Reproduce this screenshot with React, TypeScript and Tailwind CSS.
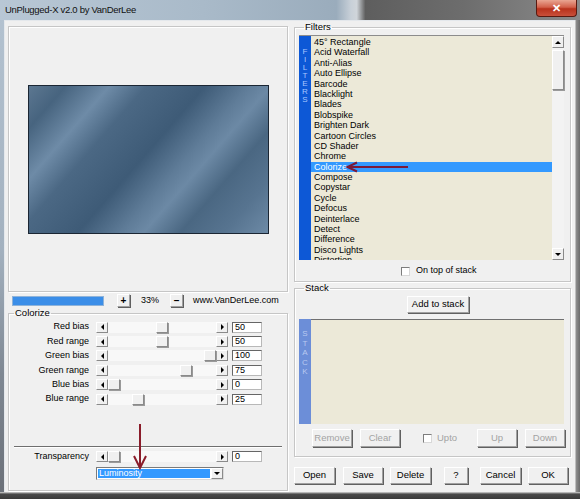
import React from 'react';

const FILTERS = [
  '45° Rectangle',
  'Acid Waterfall',
  'Anti-Alias',
  'Auto Ellipse',
  'Barcode',
  'Blacklight',
  'Blades',
  'Blobspike',
  'Brighten Dark',
  'Cartoon Circles',
  'CD Shader',
  'Chrome',
  'Colorize',
  'Compose',
  'Copystar',
  'Cycle',
  'Defocus',
  'Deinterlace',
  'Detect',
  'Difference',
  'Disco Lights',
  'Distortion'
];

const SLIDERS = [
  { label: 'Red bias', value: 50 },
  { label: 'Red range', value: 50 },
  { label: 'Green bias', value: 100 },
  { label: 'Green range', value: 75 },
  { label: 'Blue bias', value: 0 },
  { label: 'Blue range', value: 25 }
];

type Dir = 'left' | 'right' | 'up' | 'down';

function Tri({ dir }: { dir: Dir }) {
  const points = {
    left: '4,0 4,6 1,3',
    right: '1,0 1,6 4,3',
    up: '0,4 6,4 3,1',
    down: '0,1 6,1 3,4'
  }[dir];
  const horizontal = dir === 'left' || dir === 'right';
  return (
    <svg
      width={horizontal ? 5 : 6}
      height={horizontal ? 6 : 5}
      viewBox={horizontal ? '0 0 5 6' : '0 0 6 5'}
      className="block"
    >
      <polygon points={points} fill="#000" />
    </svg>
  );
}

const raised =
  'border border-t-white border-l-white border-r-[#8a8a8a] border-b-[#8a8a8a] bg-[#f0f0f0]';

function ArrowBtn({ dir, className = '' }: { dir: Dir; className?: string }) {
  return (
    <div className={`flex items-center justify-center ${raised} ${className}`}>
      <Tri dir={dir} />
    </div>
  );
}

function Button({
  children,
  className = '',
  disabled = false
}: {
  children: React.ReactNode;
  className?: string;
  disabled?: boolean;
}) {
  return (
    <div
      className={`flex items-center justify-center border border-t-white border-l-white border-r-[#a0a0a0] border-b-[#a0a0a0] bg-[#f0f0f0] text-[9.5px] shadow-[1px_1px_0_#606060] ${
        disabled ? 'text-[#a3a3a3]' : 'text-black'
      } ${className}`}
    >
      {children}
    </div>
  );
}

function Checkbox() {
  return (
    <div className="h-[9px] w-[9px] border border-[#7d7d7d] border-r-[#d8d8d8] border-b-[#d8d8d8] bg-white" />
  );
}

function ValueBox({ value }: { value: string }) {
  return (
    <div className="ml-[4px] h-[11px] w-[30px] border border-[#b8b8b8] border-l-[#666] border-t-[#666] bg-white pl-[2px] text-[9px] leading-[9px]">
      {value}
    </div>
  );
}

function SliderRow({ label, value }: { label: string; value: number }) {
  return (
    <div className="flex h-[14.4px] items-center">
      <span className="w-[80px] text-right text-[9px]">{label}</span>
      <div className="ml-[7px] flex h-[11px] w-[132px]">
        <ArrowBtn dir="left" className="w-[12px]" />
        <div className="relative flex-1 bg-[#f8f8f8]">
          <div
            className={`absolute top-0 h-full w-[12px] ${raised} shadow-[1px_1px_0_#9a9a9a]`}
            style={{ left: Math.round(value * 0.96) }}
          />
        </div>
        <ArrowBtn dir="right" className="w-[12px]" />
      </div>
      <ValueBox value={String(value)} />
    </div>
  );
}

function GroupLabel({ children }: { children: React.ReactNode }) {
  return <legend className="ml-[5px] px-[1px] text-[9.5px] leading-[10px]">{children}</legend>;
}

const etched = 'border border-[#c6c6c6] shadow-[inset_1px_1px_0_#fff,1px_1px_0_#fff]';

function SideBar({ text, color, letterColor, pt, step }: { text: string; color: string; letterColor: string; pt: string; step: string }) {
  return (
    <div className={`flex w-[12px] shrink-0 flex-col items-center ${color} ${pt}`}>
      {text.split('').map((ch, i) => (
        <span key={i} className={`text-[8px] ${step} ${letterColor}`}>
          {ch}
        </span>
      ))}
    </div>
  );
}

function LeftColumn() {
  return (
    <div className="flex w-[280px] flex-col pt-[5px]">
      <div className={`flex h-[266px] items-center justify-center ${etched} bg-[#f0f0f0]`}>
        <div className="h-[149px] w-[241px] border border-[#1b2633] bg-[linear-gradient(131deg,#5c7791_0%,#47647f_10%,#6e8ba7_22%,#4b6884_32%,#3e5b77_48%,#5f7c98_60%,#6c89a5_66%,#4a6782_76%,#577490_88%,#6d8aa6_100%)]" />
      </div>

      <div className="mt-[1px] flex h-[15px] items-center text-[9px]">
        <div className="ml-[4px] h-[10px] w-[92px] border border-[#8fb3d9] bg-[#3b8ee8]" />
        <Button className="ml-[13px] h-[13px] w-[13px] !text-[10px] font-bold leading-none">+</Button>
        <span className="w-[40px] text-center">33%</span>
        <Button className="h-[13px] w-[13px] !text-[10px] font-bold leading-none">–</Button>
        <span className="ml-[10px]">www.VanDerLee.com</span>
      </div>

      <fieldset className={`h-[183px] ${etched}`}>
        <GroupLabel>Colorize</GroupLabel>
        <div className="mt-[2px] flex flex-col">
          {SLIDERS.map((s) => (
            <SliderRow key={s.label} label={s.label} value={s.value} />
          ))}
        </div>
        <div className="relative mt-[40px]">
          <div className="mx-[5px] h-[2px] border-t border-[#6f6f6f] border-b border-b-white" />
          <div className="mt-[1px]">
            <SliderRow label="Transparency" value={0} />
          </div>
          <div className="ml-[87px] mt-[3px] flex h-[13px] w-[128px] border border-[#7a7a7a] border-r-[#dadada] border-b-[#dadada] bg-white">
            <div className="m-[1px] flex-1 bg-[#3399ff] pl-[1px] text-[9px] leading-[9px] text-white">Luminosity</div>
            <ArrowBtn dir="down" className="w-[12px]" />
          </div>
          <svg className="absolute left-[124px] -top-[22px]" width="14" height="46" viewBox="0 0 14 46">
            <line x1="7" y1="0" x2="7" y2="44" stroke="#8a1c2a" strokeWidth="2" />
            <polyline points="1,32 7,44 13,32" fill="none" stroke="#8a1c2a" strokeWidth="2" />
          </svg>
        </div>
      </fieldset>
    </div>
  );
}

function FilterList() {
  return (
    <div className="flex h-[225px] w-[265px] border-t border-[#8c8c8c]">
      <SideBar text="FILTERS" color="bg-[#0d58d6]" letterColor="text-[#a9c6ff]" pt="pt-[12px]" step="leading-[8px]" />
      <div className="flex-1 overflow-hidden bg-[#ece9d8] pt-[1px] text-[9px]">
        {FILTERS.map((name) => (
          <div
            key={name}
            className={`relative h-[10.4px] pl-[3px] leading-[10.4px] ${
              name === 'Colorize' ? 'bg-[#3399ff] text-white' : 'text-black'
            }`}
          >
            {name}
            {name === 'Colorize' ? (
              <svg className="absolute left-[34px] -top-[1px]" width="64" height="12" viewBox="0 0 64 12">
                <line x1="2" y1="6" x2="63" y2="6" stroke="#7a1a3a" strokeWidth="2" />
                <polyline points="12,1.5 2.5,6 12,10.5" fill="none" stroke="#7a1a3a" strokeWidth="2" />
              </svg>
            ) : null}
          </div>
        ))}
      </div>
      <div className="flex w-[12px] flex-col bg-[#f3f3f3]">
        <ArrowBtn dir="up" className="h-[12px]" />
        <div className={`mt-[2px] h-[40px] ${raised} shadow-[1px_1px_0_#9a9a9a]`} />
        <div className="flex-1" />
        <ArrowBtn dir="down" className="h-[12px]" />
      </div>
    </div>
  );
}

function RightColumn() {
  return (
    <div className="flex w-[277px] flex-col pt-[1px]">
      <fieldset className={`h-[260px] px-[4px] ${etched}`}>
        <GroupLabel>Filters</GroupLabel>
        <div className="mt-[3px]">
          <FilterList />
        </div>
        <div className="mt-[5px] flex h-[12px] items-center pl-[102px] text-[9px]">
          <Checkbox />
          <span className="ml-[6px]">On top of stack</span>
        </div>
      </fieldset>

      <fieldset className={`mt-[1px] h-[174px] px-[4px] ${etched}`}>
        <GroupLabel>Stack</GroupLabel>
        <Button className="ml-[108px] mt-[3px] h-[17px] w-[62px]">Add to stack</Button>
        <div className="mt-[6px] flex h-[105px] w-[265px]">
          <SideBar text="STACK" color="bg-[#6c8ed8]" letterColor="text-[#b9c9f0]" pt="pt-[10px]" step="leading-[9.5px]" />
          <div className="flex-1 border-t border-[#707070] bg-[#ece9d8]" />
        </div>
        <div className="mt-[5px] flex h-[18px] items-center">
          <Button disabled className="ml-[13px] h-[18px] w-[40px]">Remove</Button>
          <Button disabled className="ml-[8px] h-[18px] w-[40px]">Clear</Button>
          <div className="ml-[23px]">
            <Checkbox />
          </div>
          <span className="ml-[5px] text-[9.5px] text-[#a3a3a3]">Upto</span>
          <Button disabled className="ml-auto h-[18px] w-[40px]">Up</Button>
          <Button disabled className="ml-[8px] mr-[1px] h-[18px] w-[40px]">Down</Button>
        </div>
      </fieldset>

      <div className="mt-[10px] flex h-[17px]">
        <Button className="w-[41px]">Open</Button>
        <Button className="ml-[8px] w-[40px]">Save</Button>
        <Button className="ml-[7px] w-[41px]">Delete</Button>
        <Button className="ml-[13px] w-[24px]">?</Button>
        <Button className="ml-[12px] w-[41px]">Cancel</Button>
        <Button className="ml-[7px] w-[40px]">OK</Button>
      </div>
    </div>
  );
}

export default function App() {
  return (
    <div className="flex h-[499px] w-[580px] flex-col overflow-hidden bg-[linear-gradient(180deg,#b4c3d1_0%,#a3b1bf_50%,#7f8893_75%,#6b7078_100%)] font-['Liberation_Sans',Arial,sans-serif] text-black">
      <div className="flex h-[20px] shrink-0 items-start justify-between bg-[linear-gradient(90deg,#b8c7d5_0%,#a9bac9_35%,#9aacbc_58%,#c8d0d8_60.5%,#d0d5da_61.5%,#5e5e5e_63%,#6d6d6d_80%,#8a8a8a_100%)]">
        <span className="ml-[5px] mt-[4px] text-[9.5px] leading-[11px] tracking-[-0.3px] text-[#111]">
          UnPlugged-X v2.0 by VanDerLee
        </span>
        <div className="mr-[3px] flex h-[17px] w-[41px] items-center justify-center rounded-b-[4px] border border-t-0 border-[#5a1a10] bg-[linear-gradient(180deg,#e9a592_0%,#d2604a_45%,#b8321c_55%,#c9503a_100%)]">
          <span className="text-[11px] font-bold leading-none text-white">✕</span>
        </div>
      </div>
      <div className="flex flex-1">
        <div className="w-[4px]" />
        <div className="flex flex-1 gap-[6px] border-t border-l border-[#e4e8ec] bg-[#f0f0f0] pl-[3px]">
          <LeftColumn />
          <RightColumn />
        </div>
        <div className="w-[5px] bg-[linear-gradient(90deg,#d8d8d8_0%,#8a8a8a_30%,#6a6a6a_100%)]" />
      </div>
      <div className="h-[7px] shrink-0 bg-[linear-gradient(180deg,#d8d8d8_0%,#4a4a4a_30%,#3a3a3a_100%)]" />
    </div>
  );
}
